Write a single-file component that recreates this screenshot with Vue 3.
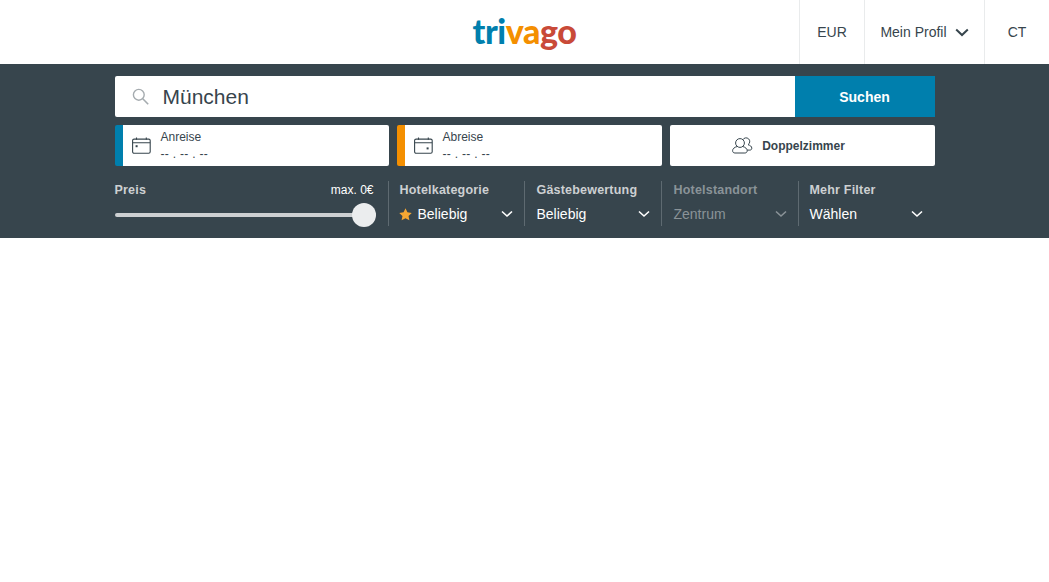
<script setup>
const filters = [
  { label: 'Hotelkategorie', value: 'Beliebig', star: true },
  { label: 'Gästebewertung', value: 'Beliebig' },
  { label: 'Hotelstandort', value: 'Zentrum', disabled: true },
  { label: 'Mehr Filter', value: 'Wählen' }
]
</script>

<template>
  <div class="page">
    <header class="top">
      <div></div>
      <div class="logo"><span class="blue">tri</span><span class="orange">va</span><span class="red">go</span></div>
      <nav class="nav">
        <div class="nav-item eur">EUR</div>
        <div class="nav-item profile">
          <span>Mein Profil</span>
          <svg width="14" height="9" viewBox="0 0 14 9" fill="none"><path d="M1.200 1.500 7 7l5.800-5.500" stroke="#37454d" stroke-width="2"/></svg>
        </div>
        <div class="nav-item ct">CT</div>
      </nav>
    </header>
    <section class="bar">
      <div class="inner">
        <div class="search">
          <div class="search-field">
            <svg class="search-icon" width="17" height="17" viewBox="0 0 17 17" fill="none" stroke="#a5abaf" stroke-width="1.400"><circle cx="6.800" cy="6.800" r="5.400"/><path d="m10.800 10.800 5.400 5.400" stroke-width="1.600"/></svg>
            <span class="city">München</span>
          </div>
          <button class="go">Suchen</button>
        </div>
        <div class="dates">
          <div class="card date date-in">
            <svg width="19" height="17" viewBox="0 0 19 17" fill="none" stroke="#37454d" stroke-width="1.100"><rect x=".6" y="2.100" width="17.600" height="14.200" rx="1.500"/><path d="M.6 5.700h17.600M4.500.4v2.400M14.300.4v2.400"/><rect x="3.600" y="8.200" width="2" height="2" fill="#37454d" stroke="none"/></svg>
            <div class="date-text"><div class="date-label">Anreise</div><div class="date-value">-- . -- . --</div></div>
          </div>
          <div class="card date date-out">
            <svg width="19" height="17" viewBox="0 0 19 17" fill="none" stroke="#37454d" stroke-width="1.100"><rect x=".6" y="2.100" width="17.600" height="14.200" rx="1.500"/><path d="M.6 5.700h17.600M4.500.4v2.400M14.300.4v2.400"/><rect x="12.600" y="10.400" width="2" height="2" fill="#37454d" stroke="none"/></svg>
            <div class="date-text"><div class="date-label">Abreise</div><div class="date-value">-- . -- . --</div></div>
          </div>
          <div class="card room">
            <svg width="21" height="17" viewBox="0 0 21 17" fill="none" stroke="#37454d" stroke-width="1"><circle cx="8" cy="6" r="4.400"/><path d="M5.200 9.500C2.500 10.200.6 11.700.6 13.700c0 1.400.9 2.300 2.300 2.300h10c1.400 0 2.300-.9 2.300-2.300 0-2-1.900-3.500-4.400-4.200"/><path d="M10.800 2.800A3.700 3.700 0 1 1 16 7.700c2.100.6 3.800 1.700 3.800 3.500 0 1.200-.8 1.900-2 1.900h-2.700"/></svg>
            <span>Doppelzimmer</span>
          </div>
        </div>
        <div class="filters">
          <div class="price">
            <div class="price-head"><span class="label">Preis</span><span class="max">max. 0€</span></div>
            <div class="track"><div class="thumb"></div></div>
          </div>
          <div v-for="f in filters" :key="f.label" class="filter" :class="{ off: f.disabled }">
            <div class="label">{{ f.label }}</div>
            <div class="value">
              <svg v-if="f.star" class="star" width="13" height="13" viewBox="0 0 24 24"><path fill="#f5a733" d="m12 .5 3.500 7.500 8 1-5.900 5.600 1.600 8.100-7.200-4-7.200 4 1.600-8.100L.5 9l8-1z"/></svg>
              <span class="value-text">{{ f.value }}</span>
              <svg class="chev" width="12" height="8" viewBox="0 0 12 8" fill="none"><path d="M1 1.500 6 6l5-4.500" stroke="currentColor" stroke-width="1.600"/></svg>
            </div>
          </div>
        </div>
      </div>
    </section>
  </div>
</template>

<style scoped>
.page {
  font-family: "Liberation Sans", Arial, sans-serif;
  color: #37454d;
  background: #fff;
  height: 582px;
  overflow: hidden;
}
.top {
  height: 64px;
  display: grid;
  grid-template-columns: 1fr auto 1fr;
  align-items: stretch;
}
.logo {
  font-family: Lato, sans-serif;
  font-weight: 900;
  font-size: 34px;
  letter-spacing: -.45px;
  line-height: 64px;
  transform: translateY(-1px);
}
.blue { color: #007fad; }
.orange { color: #f48f00; }
.red { color: #c94a38; }
.nav {
  display: flex;
  justify-content: flex-end;
}
.nav-item {
  font-size: 14px;
  box-sizing: border-box;
  border-left: 1px solid #e9ebec;
  display: flex;
  align-items: center;
  justify-content: center;
  gap: 8px;
}
.eur { width: 65px; }
.profile { width: 120px; }
.ct { width: 65px; }
.bar {
  height: 174px;
  background: #37454d;
  padding-top: 12px;
  box-sizing: border-box;
}
.inner {
  width: 820px;
  margin: 0 auto;
  display: flex;
  flex-direction: column;
  gap: 8px;
}
.search {
  display: flex;
  height: 41px;
}
.search-field {
  flex: 1;
  background: #fff;
  border-radius: 2px 0 0 2px;
  display: flex;
  align-items: center;
  padding-left: 17px;
  gap: 14px;
}
.city {
  font-size: 21px;
  line-height: 41px;
}
.go {
  width: 140px;
  border: 0;
  background: #007fad;
  color: #fff;
  font: bold 14px "Liberation Sans", Arial, sans-serif;
  padding: 0;
}
.dates {
  display: flex;
  gap: 8px;
  height: 41px;
}
.card {
  background: #fff;
  border-radius: 2px;
  display: flex;
  align-items: center;
  box-sizing: border-box;
}
.date {
  width: 265px;
  gap: 10px;
}
.date > svg { margin-left: 9px; }
.date-in {
  width: 274px;
  border-left: 8px solid #007fad;
}
.date-out { border-left: 8px solid #f48f00; }
.date-label {
  font-size: 12px;
  line-height: 15px;
}
.date-value {
  font-size: 12px;
  line-height: 15px;
  margin-top: 2px;
  letter-spacing: .3px;
}
.room {
  width: 265px;
  justify-content: center;
  gap: 9px;
  padding-right: 27px;
  font-size: 12px;
  font-weight: bold;
}
.filters {
  display: grid;
  grid-template-columns: 273px 136px 137px 137px 137px;
  height: 42px;
  margin-top: 7px;
}
.price {
  padding-right: 14px;
  box-sizing: border-box;
}
.price-head {
  display: flex;
  justify-content: space-between;
  align-items: center;
  height: 18px;
}
.label {
  font-size: 12.500px;
  font-weight: bold;
  color: #cdd0d2;
  line-height: 18px;
  white-space: nowrap;
  letter-spacing: .2px;
}
.max {
  font-size: 12px;
  color: #fff;
}
.track {
  position: relative;
  height: 4px;
  margin: 14px -2px 0 0;
  border-radius: 2px;
  background: #cdd0d2;
}
.thumb {
  position: absolute;
  right: 0;
  top: -10px;
  width: 24px;
  height: 24px;
  border-radius: 50%;
  background: #ebedee;
}
.filter {
  box-sizing: border-box;
  border-left: 1px solid #5e6a71;
  padding: 0 11px;
}
.filter:nth-child(3),
.filter:nth-child(4) {
  padding-left: 12px;
}
.filter:last-child {
  padding-right: 12px;
}
.value {
  display: flex;
  align-items: center;
  height: 24px;
  margin-top: 3px;
  color: #fff;
  font-size: 14px;
}
.star { margin: 0 6px 0 -1px; }
.value-text { flex: 1; }
.filter .label { height: 18px; }
.off .label { color: #8a9398; }
.off .value { color: #8a9398; }
</style>
